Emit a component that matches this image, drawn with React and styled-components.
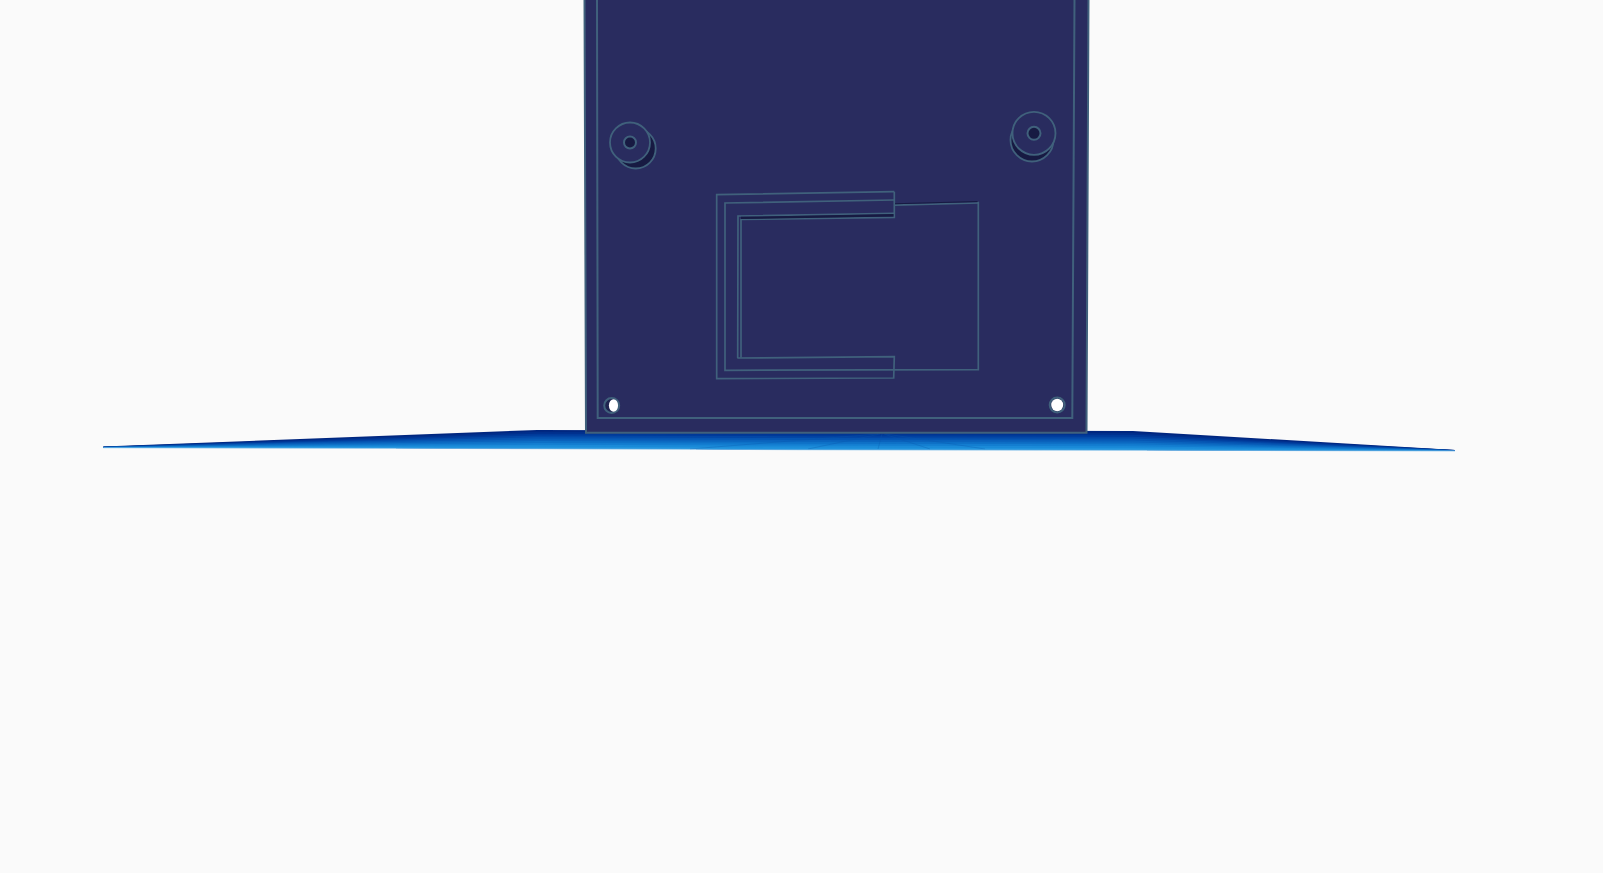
import React from "react";
import styled, { createGlobalStyle } from "styled-components";

const GlobalStyle = createGlobalStyle`
  html, body {
    margin: 0;
    height: 100%;
    background: #fafafa;
    overflow: hidden;
  }
`;

const Viewport = styled.div`
  width: 1603px;
  height: 873px;
  background: #fafafa;
`;

const Scene = styled.svg`
  display: block;
  width: 100%;
  height: 100%;
`;

const LINE = "#40617c";
const PLATE = "#292c5f";
const SHADOW = "#171a42";

// profile of the blue base seen edge on, sampled at the same x values
const xs = [103.3, 537, 800, 1133, 1455];
const baseTop = [446.6, 430, 430.5, 431, 450];
const baseBottom = [447.4, 448.4, 449.4, 450, 450.6];

const bandColors = [
  "#00267f", "#002f8c", "#003a9a", "#0347a6", "#0655b2",
  "#0a62bc", "#0e70c6", "#137dd0", "#1a8ad8", "#2193dd",
];

const lerp = (a, b, t) => a + (b - a) * t;

function bandPoints(t0) {
  const upper = xs.map((x, i) => `${x},${lerp(baseTop[i], baseBottom[i], t0)}`);
  const lower = xs.map((x, i) => `${x},${baseBottom[i]}`);
  return [...upper, ...lower.reverse()].join(" ");
}

function BlueBase() {
  return (
    <g>
      {bandColors.map((color, i) => (
        <polygon key={color} points={bandPoints(i / bandColors.length)} fill={color} />
      ))}
      <g stroke="#0a58ac" strokeWidth="0.7" opacity="0.45">
        <line x1="880" y1="434" x2="808" y2="449" />
        <line x1="882" y1="434" x2="878" y2="449" />
        <line x1="884" y1="434" x2="930" y2="449" />
        <line x1="886" y1="434" x2="985" y2="449" />
        <line x1="878" y1="434" x2="690" y2="449" />
      </g>
      <polyline
        points={xs.map((x, i) => `${x},${baseBottom[i] + 0.3}`).join(" ")}
        fill="none"
        stroke="#6db5e6"
        strokeWidth="0.8"
      />
    </g>
  );
}

function Boss({ front, back, r, backR, holeR }) {
  return (
    <g stroke={LINE} strokeWidth="1.8">
      <circle cx={back[0]} cy={back[1]} r={backR} fill={SHADOW} />
      <circle cx={front[0]} cy={front[1]} r={r} fill={PLATE} />
      <circle cx={front[0]} cy={front[1]} r={holeR} fill={SHADOW} strokeWidth="2" />
    </g>
  );
}

function Hole({ cx, cy, offset }) {
  return (
    <g>
      <circle cx={cx} cy={cy} r="7.5" fill="#1f2450" stroke={LINE} strokeWidth="2" />
      <ellipse cx={cx + offset} cy={cy} rx={offset ? 4.6 : 6} ry="6.2" fill="#ffffff" />
    </g>
  );
}

function Outline({ points }) {
  return <polyline points={points} fill="none" stroke={LINE} strokeWidth="1.7" />;
}

function Plate() {
  return (
    <g>
      <polygon
        points="584.5,-2 1088.5,-2 1086.5,432.7 586,432.7"
        fill={PLATE}
        stroke={LINE}
        strokeWidth="2"
      />
      <polyline
        points="597,-2 597.7,418 1072.3,418 1074.5,-2"
        fill="none"
        stroke={LINE}
        strokeWidth="2"
      />
      <Boss front={[630, 142.5]} back={[635.7, 148.5]} r={20} backR={20} holeR={6} />
      <Boss front={[1034, 133.3]} back={[1032, 140]} r={21.5} backR={21.5} holeR={6.5} />
      <Hole cx={611.7} cy={405.5} offset={1.8} />
      <Hole cx={1057.2} cy={405} offset={0} />
    </g>
  );
}

function Cutout() {
  return (
    <g>
      <Outline points="894.3,191.7 716.7,194.7 716.7,378.7 893.7,378 894.3,356.7 737.3,358" />
      <Outline points="894.3,200 725,203 725,370.3 978.3,369.7 978.3,201.7" />
      <Outline points="978.3,203 894.3,205.2" />
      <Outline points="894.3,191.7 894.3,217.3 741,219.5 741,357.8" />
      <Outline points="894.3,213.3 738,216 737.7,358" />
      {/* dark inner walls sit over the outlines */}
      <polygon points="741,216.8 893.5,214 893.5,216.6 741,219" fill={SHADOW} />
      <polygon points="895,203.2 977.5,201 977.5,202 895,204.2" fill={SHADOW} />
    </g>
  );
}

export default function App() {
  return (
    <Viewport>
      <GlobalStyle />
      <Scene viewBox="0 0 1603 873">
        <BlueBase />
        <Plate />
        <Cutout />
      </Scene>
    </Viewport>
  );
}
